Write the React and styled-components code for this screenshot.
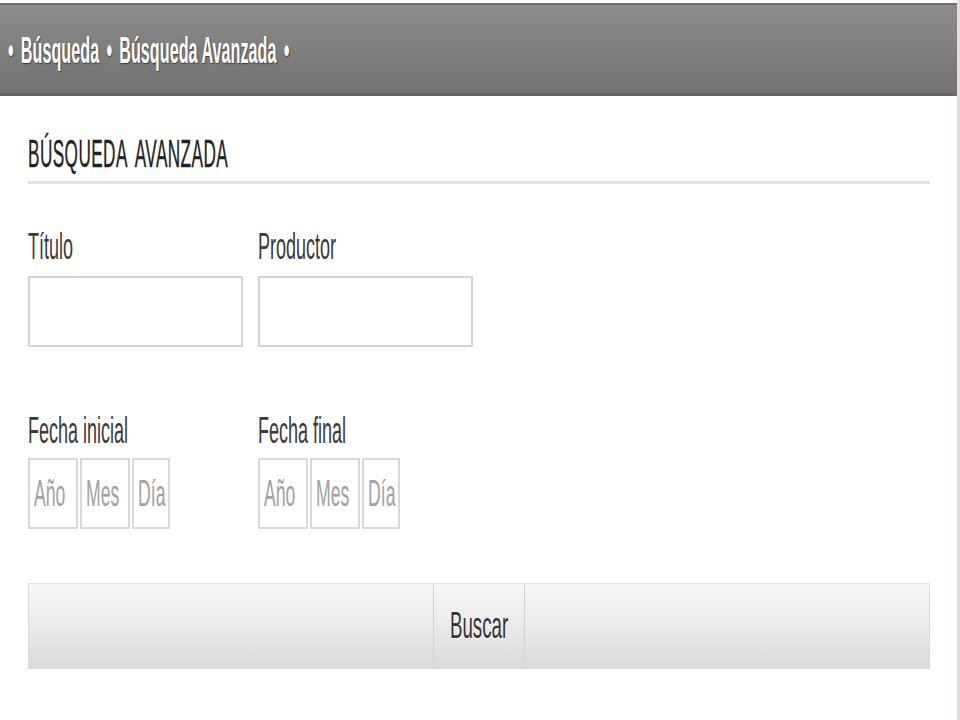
import styled, { createGlobalStyle } from "styled-components";

const GlobalStyle = createGlobalStyle`
  body {
    margin: 0;
    background: #fff;
    font-family: "Liberation Sans", Arial, sans-serif;
  }
`;

const Page = styled.div`
  width: 957px;
  height: 720px;
  border-right: 3px solid #ecdcd8;
  background: #fff;
  overflow: hidden;
`;

const Header = styled.header`
  margin-top: 3px;
  height: 88px;
  border-top: 2px solid #6c6c6c;
  border-bottom: 3px solid #666;
  background: linear-gradient(#8c8c8c, #727272);
  display: flex;
  align-items: center;
  padding-left: 8px;
`;

// everything in the shot is squeezed sideways, so text is scaled on x
const Narrow = styled.span`
  display: inline-block;
  white-space: nowrap;
  transform: scaleX(${(p) => p.$sx || 0.5});
  transform-origin: ${(p) => (p.$center ? "center" : "left")} center;
`;

const Crumbs = styled(Narrow)`
  color: #fff;
  font-size: 36px;
  font-weight: 700;
  line-height: 40px;
  text-shadow: 1px 1px 2px #333;
  margin-top: 4px;
  span + span {
    margin-left: 16px;
  }
`;

const Content = styled.main`
  padding: 0 27px 0 28px;
`;

const Heading = styled.h2`
  margin: 37px 0 0;
  padding-bottom: 6px;
  border-bottom: 3px solid #e2e2e2;
  font-size: 39px;
  font-weight: 400;
  line-height: 42px;
  letter-spacing: 1px;
  word-spacing: 8px;
  color: #222;
  -webkit-text-stroke: 0.4px #222;
`;

const Row = styled.div`
  display: flex;
  gap: 15px;
  margin-top: ${(p) => p.$top}px;
`;

const Field = styled.div`
  width: 215px;
`;

const Label = styled.label`
  display: block;
  font-size: 36px;
  line-height: 40px;
  color: #3a3a3a;
  margin-bottom: ${(p) => p.$gap}px;
`;

const TextBox = styled.div`
  box-sizing: border-box;
  width: 215px;
  height: 71px;
  border: 2px solid #d4d4d4;
  background: #fff;
`;

const DateGroup = styled.div`
  display: flex;
  gap: 2px;
`;

const DateBox = styled.div`
  box-sizing: border-box;
  width: ${(p) => p.$w}px;
  height: 71px;
  border: 2px solid #d8d8d8;
  display: flex;
  align-items: center;
  padding-left: 4px;
  font-size: 36px;
  color: #a2a2a2;
  overflow: hidden;
`;

const ButtonBar = styled.div`
  box-sizing: border-box;
  margin-top: 54px;
  height: 86px;
  border: 1px solid #dadada;
  border-top-color: #e4e4e4;
  background: linear-gradient(#f6f6f6, #ececec 45%, #dadada);
  display: flex;
  justify-content: center;
`;

const SearchButton = styled.button`
  width: 92px;
  height: 100%;
  border: none;
  border-left: 1px solid #d2d2d2;
  border-right: 1px solid #d2d2d2;
  background: transparent;
  font-family: inherit;
  font-size: 36px;
  color: #333;
  text-shadow: 0 1px 1px #fff;
  padding: 0;
  display: flex;
  align-items: center;
  justify-content: center;
`;

const dateParts = [
  { name: "Año", w: 50 },
  { name: "Mes", w: 50 },
  { name: "Día", w: 38 },
];

const DateInput = () => (
  <DateGroup>
    {dateParts.map((d) => (
      <DateBox key={d.name} $w={d.w}>
        <Narrow $sx={0.49}>{d.name}</Narrow>
      </DateBox>
    ))}
  </DateGroup>
);

export default function App() {
  return (
    <>
      <GlobalStyle />
      <Page>
        <Header>
          <Crumbs $sx={0.45}>
            <span>•</span>
            <span>Búsqueda</span>
            <span>•</span>
            <span>Búsqueda Avanzada</span>
            <span>•</span>
          </Crumbs>
        </Header>

        <Content>
          <Heading>
            <Narrow $sx={0.44}>BÚSQUEDA AVANZADA</Narrow>
          </Heading>

          <Row $top={43}>
            <Field>
              <Label $gap={9}><Narrow>Título</Narrow></Label>
              <TextBox />
            </Field>
            <Field>
              <Label $gap={9}><Narrow>Productor</Narrow></Label>
              <TextBox />
            </Field>
          </Row>

          <Row $top={64}>
            <Field>
              <Label $gap={7}><Narrow>Fecha inicial</Narrow></Label>
              <DateInput />
            </Field>
            <Field>
              <Label $gap={7}><Narrow>Fecha final</Narrow></Label>
              <DateInput />
            </Field>
          </Row>

          <ButtonBar>
            <SearchButton>
              <Narrow $sx={0.52} $center>Buscar</Narrow>
            </SearchButton>
          </ButtonBar>
        </Content>
      </Page>
    </>
  );
}
